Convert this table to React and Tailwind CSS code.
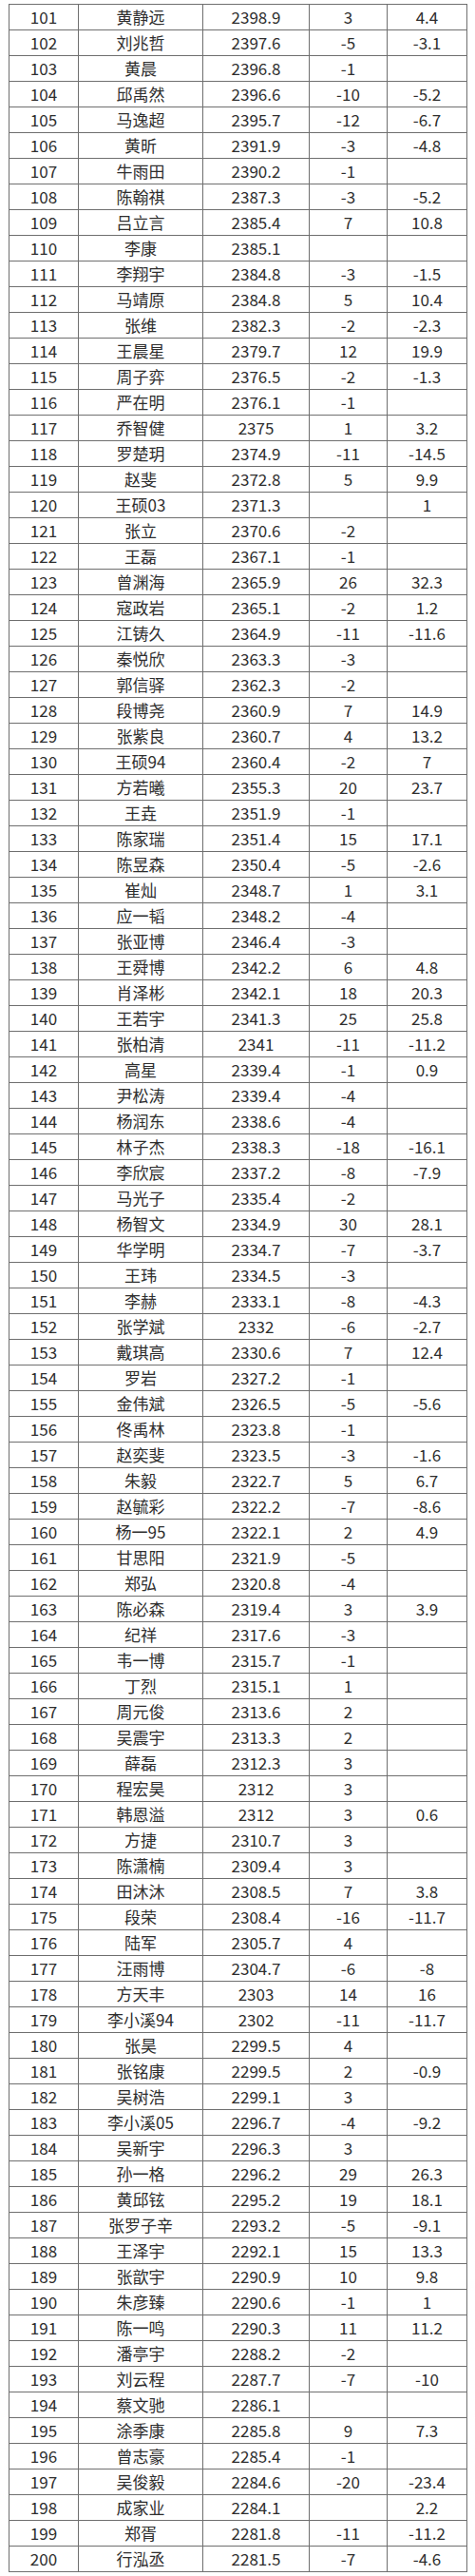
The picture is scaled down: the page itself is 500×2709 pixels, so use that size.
import React from 'react';

const raw = `101 黄静远 2398.9 3 4.4
102 刘兆哲 2397.6 -5 -3.1
103 黄晨 2396.8 -1 _
104 邱禹然 2396.6 -10 -5.2
105 马逸超 2395.7 -12 -6.7
106 黄昕 2391.9 -3 -4.8
107 牛雨田 2390.2 -1 _
108 陈翰祺 2387.3 -3 -5.2
109 吕立言 2385.4 7 10.8
110 李康 2385.1 _ _
111 李翔宇 2384.8 -3 -1.5
112 马靖原 2384.8 5 10.4
113 张维 2382.3 -2 -2.3
114 王晨星 2379.7 12 19.9
115 周子弈 2376.5 -2 -1.3
116 严在明 2376.1 -1 _
117 乔智健 2375 1 3.2
118 罗楚玥 2374.9 -11 -14.5
119 赵斐 2372.8 5 9.9
120 王硕03 2371.3 _ 1
121 张立 2370.6 -2 _
122 王磊 2367.1 -1 _
123 曾渊海 2365.9 26 32.3
124 寇政岩 2365.1 -2 1.2
125 江铸久 2364.9 -11 -11.6
126 秦悦欣 2363.3 -3 _
127 郭信驿 2362.3 -2 _
128 段博尧 2360.9 7 14.9
129 张紫良 2360.7 4 13.2
130 王硕94 2360.4 -2 7
131 方若曦 2355.3 20 23.7
132 王垚 2351.9 -1 _
133 陈家瑞 2351.4 15 17.1
134 陈昱森 2350.4 -5 -2.6
135 崔灿 2348.7 1 3.1
136 应一韬 2348.2 -4 _
137 张亚博 2346.4 -3 _
138 王舜博 2342.2 6 4.8
139 肖泽彬 2342.1 18 20.3
140 王若宇 2341.3 25 25.8
141 张柏清 2341 -11 -11.2
142 高星 2339.4 -1 0.9
143 尹松涛 2339.4 -4 _
144 杨润东 2338.6 -4 _
145 林子杰 2338.3 -18 -16.1
146 李欣宸 2337.2 -8 -7.9
147 马光子 2335.4 -2 _
148 杨智文 2334.9 30 28.1
149 华学明 2334.7 -7 -3.7
150 王玮 2334.5 -3 _
151 李赫 2333.1 -8 -4.3
152 张学斌 2332 -6 -2.7
153 戴琪高 2330.6 7 12.4
154 罗岩 2327.2 -1 _
155 金伟斌 2326.5 -5 -5.6
156 佟禹林 2323.8 -1 _
157 赵奕斐 2323.5 -3 -1.6
158 朱毅 2322.7 5 6.7
159 赵毓彩 2322.2 -7 -8.6
160 杨一95 2322.1 2 4.9
161 甘思阳 2321.9 -5 _
162 郑弘 2320.8 -4 _
163 陈必森 2319.4 3 3.9
164 纪祥 2317.6 -3 _
165 韦一博 2315.7 -1 _
166 丁烈 2315.1 1 _
167 周元俊 2313.6 2 _
168 吴震宇 2313.3 2 _
169 薛磊 2312.3 3 _
170 程宏昊 2312 3 _
171 韩恩溢 2312 3 0.6
172 方捷 2310.7 3 _
173 陈潇楠 2309.4 3 _
174 田沐沐 2308.5 7 3.8
175 段荣 2308.4 -16 -11.7
176 陆军 2305.7 4 _
177 汪雨博 2304.7 -6 -8
178 方天丰 2303 14 16
179 李小溪94 2302 -11 -11.7
180 张昊 2299.5 4 _
181 张铭康 2299.5 2 -0.9
182 吴树浩 2299.1 3 _
183 李小溪05 2296.7 -4 -9.2
184 吴新宇 2296.3 3 _
185 孙一格 2296.2 29 26.3
186 黄邱铉 2295.2 19 18.1
187 张罗子辛 2293.2 -5 -9.1
188 王泽宇 2292.1 15 13.3
189 张歆宇 2290.9 10 9.8
190 朱彦臻 2290.6 -1 1
191 陈一鸣 2290.3 11 11.2
192 潘亭宇 2288.2 -2 _
193 刘云程 2287.7 -7 -10
194 蔡文驰 2286.1 _ _
195 涂季康 2285.8 9 7.3
196 曾志豪 2285.4 -1 _
197 吴俊毅 2284.6 -20 -23.4
198 成家业 2284.1 _ 2.2
199 郑胥 2281.8 -11 -11.2
200 行泓丞 2281.5 -7 -4.6`;

const rows = raw.split('\n').map((line) => line.split(' ').map((v) => (v === '_' ? '' : v)));

const cell = 'border border-[#6f6f6f] p-0 h-[27px] text-center align-middle';

export default function App() {
  return (
    <div className="bg-white w-[500px] pt-[4px] pl-[9px] pb-[5px] font-['Noto_Sans_CJK_SC','Noto_Sans',sans-serif] text-[17px] leading-[26px] text-[#2e2e2e]">
      <table className="table-fixed border-collapse w-[482px]">
        <colgroup>
          <col className="w-[73px]" />
          <col className="w-[131px]" />
          <col className="w-[112px]" />
          <col className="w-[82px]" />
          <col className="w-[84px]" />
        </colgroup>
        <tbody>
          {rows.map((r) => (
            <tr key={r[0]}>
              {r.map((v, i) => (
                <td key={i} className={cell}>
                  {v}
                </td>
              ))}
            </tr>
          ))}
        </tbody>
      </table>
    </div>
  );
}
